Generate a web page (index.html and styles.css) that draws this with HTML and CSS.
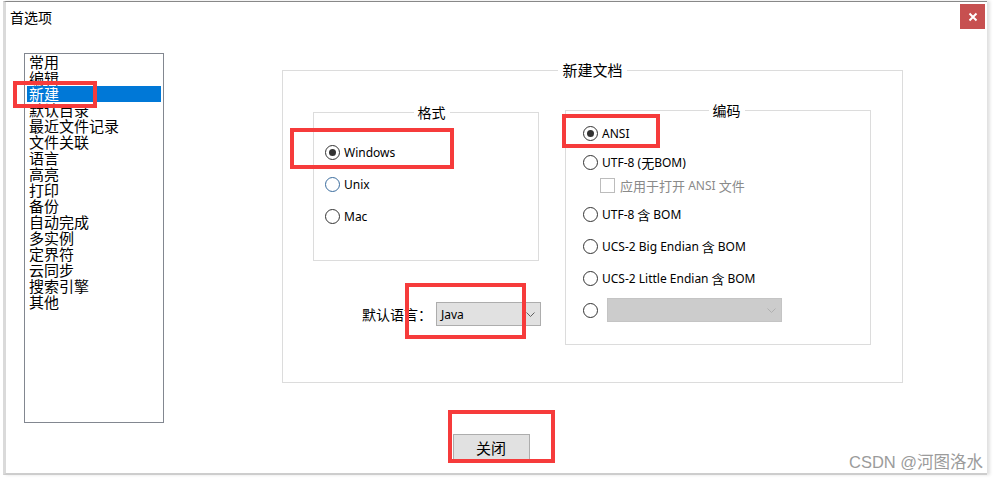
FILE: index.html
```html
<!DOCTYPE html>
<html lang="zh-CN">
<head>
  <meta charset="UTF-8">
  <meta name="viewport" content="width=device-width, initial-scale=1.0">
  <link rel="stylesheet" href="styles.css">
</head>
<body>
  <!-- 对话框窗口 -->
  <div class="window">
    <div class="titlebar">
      <span class="title">首选项</span>
      <button class="close">
        <svg width="10" height="10" viewBox="0 0 10 10"><path d="M1.5 1.5 L8.5 8.5 M8.5 1.5 L1.5 8.5" stroke="#fff" stroke-width="2"/></svg>
      </button>
    </div>

    <div class="content">
      <!-- 左侧分类列表 -->
      <ul class="nav">
        <li>常用</li>
        <li>编辑</li>
        <li class="selected">新建</li>
        <li>默认目录</li>
        <li>最近文件记录</li>
        <li>文件关联</li>
        <li>语言</li>
        <li>高亮</li>
        <li>打印</li>
        <li>备份</li>
        <li>自动完成</li>
        <li>多实例</li>
        <li>定界符</li>
        <li>云同步</li>
        <li>搜索引擎</li>
        <li>其他</li>
      </ul>

      <!-- 新建文档 -->
      <fieldset class="group main">
        <legend>新建文档</legend>
        <div class="main-inner">
          <div class="left-col">
            <fieldset class="group format">
              <legend>格式</legend>
              <div class="opt"><span class="radio on"></span>Windows</div>
              <div class="opt"><span class="radio hover"></span>Unix</div>
              <div class="opt"><span class="radio"></span>Mac</div>
            </fieldset>
            <div class="lang-row">
              <label>默认语言：</label>
              <div class="combo">
                <span>Java</span>
                <svg width="9" height="5" viewBox="0 0 9 5"><polyline points="0.5,0.5 4.5,4.5 8.5,0.5" fill="none" stroke="#606060"/></svg>
              </div>
            </div>
          </div>

          <fieldset class="group enc">
            <legend>编码</legend>
            <div class="opt gap7"><span class="radio on"></span>ANSI</div>
            <div class="opt gap13"><span class="radio"></span>UTF-8 (<span class="zh">无</span>BOM)</div>
            <div class="opt sub gap7"><span class="checkbox"></span><span class="zh">应用于打开</span>&nbsp;ANSI&nbsp;<span class="zh">文件</span></div>
            <div class="opt gap13"><span class="radio"></span>UTF-8 <span class="zh">&nbsp;含&nbsp;</span>BOM</div>
            <div class="opt"><span class="radio"></span>UCS-2 Big Endian <span class="zh">&nbsp;含&nbsp;</span>BOM</div>
            <div class="opt"><span class="radio"></span>UCS-2 Little Endian <span class="zh">&nbsp;含&nbsp;</span>BOM</div>
            <div class="opt combo-row"><span class="radio"></span>
              <div class="combo disabled">
                <svg width="9" height="5" viewBox="0 0 9 5"><polyline points="0.5,0.5 4.5,4.5 8.5,0.5" fill="none" stroke="#b0b0b0"/></svg>
              </div>
            </div>
          </fieldset>
        </div>
      </fieldset>
    </div>

    <div class="footer">
      <button class="btn">关闭</button>
    </div>
  </div>

  <!-- 截图上的红色标注框 -->
  <div class="mark" style="left:13px; top:81px; width:84px; height:27px;"></div>
  <div class="mark" style="left:290px; top:128px; width:164px; height:41px;"></div>
  <div class="mark" style="left:562px; top:114px; width:98px; height:34px;"></div>
  <div class="mark" style="left:405px; top:283px; width:121px; height:56px;"></div>
  <div class="mark" style="left:448px; top:410px; width:107px; height:53px;"></div>

  <div class="watermark">CSDN @河图洛水</div>
</body>
</html>
```

FILE: styles.css
```css
body {
  margin: 0;
  padding: 1px 0 0 3px;
  position: relative;
  width: 1001px;
  height: 480px;
  box-sizing: border-box;
  overflow: hidden;
  background: #fff;
  font-family: "Noto Sans", "Noto Sans CJK SC", sans-serif;
  color: #000;
}

/* 窗口外框 */
.window {
  box-sizing: border-box;
  width: 984px;
  height: 474px;
  border-top: 1px solid #888;
  border-left: 3px solid #dadada;
  border-bottom: 2px solid #cdcdcd;
  box-shadow: 3px 0 3px rgba(0, 0, 0, 0.12);
  background: #fff;
}

.titlebar {
  display: flex;
  align-items: center;
  height: 30px;
}
.title {
  padding-left: 4px;
  font-family: "Noto Sans CJK SC", sans-serif;
  font-size: 14px;
}
.close {
  margin: 2px 2px 0 auto;
  align-self: flex-start;
  width: 25px;
  height: 25px;
  padding: 0;
  border: 0;
  background: #c75050;
  display: flex;
  align-items: center;
  justify-content: center;
}

.content {
  display: flex;
  align-items: flex-start;
  margin-top: 21px;
  padding-left: 18px;
}

/* 左侧列表 */
.nav {
  list-style: none;
  margin: 0;
  padding: 0;
  box-sizing: border-box;
  width: 140px;
  height: 370px;
  border: 1px solid #828790;
  font-family: "Noto Sans CJK SC", sans-serif;
  font-size: 15px;
  line-height: 16px;
}
.nav li {
  margin: 0 2px;
  padding-left: 2px;
}
.nav li.selected {
  background: #0078d7;
  color: #fff;
}

/* 分组框 */
.group {
  box-sizing: border-box;
  margin: 0;
  padding: 0;
  min-width: 0;
  border: 1px solid #dcdcdc;
}
.group legend {
  margin: 0 auto;
  padding: 0 4px;
  font-family: "Noto Sans CJK SC", sans-serif;
  font-size: 15px;
  line-height: 16px;
}
.format legend,
.enc legend {
  font-size: 14px;
}

.main {
  margin: 9px 0 0 118px;
  width: 621px;
  height: 321px;
}
.main-inner {
  display: flex;
  align-items: flex-start;
  padding: 24px 0 0 30px;
}

.left-col {
  width: 226px;
  margin-top: 2px;
}
.format {
  width: 226px;
  height: 157px;
  padding: 16px 0 0 11px;
}

.opt {
  display: flex;
  align-items: center;
  height: 32px;
  font-size: 12px;
  white-space: nowrap;
}
.zh {
  font-family: "Noto Sans CJK SC", sans-serif;
  font-size: 13px;
}

.radio {
  box-sizing: border-box;
  flex: none;
  width: 15px;
  height: 15px;
  margin-right: 4px;
  border: 1px solid #333;
  border-radius: 50%;
  background: #fff;
  display: flex;
  align-items: center;
  justify-content: center;
}
.radio.hover {
  border-color: #3a6c9e;
}
.radio.on::after {
  content: "";
  width: 7px;
  height: 7px;
  border-radius: 50%;
  background: #333;
}

.checkbox {
  box-sizing: border-box;
  flex: none;
  width: 15px;
  height: 15px;
  margin-right: 5px;
  border: 1px solid #bcbcbc;
  background: #fff;
}

.lang-row {
  display: flex;
  justify-content: flex-end;
  align-items: center;
  gap: 4px;
  margin: 41px -2px 0 0;
  font-family: "Noto Sans CJK SC", sans-serif;
  font-size: 14px;
}

.combo {
  box-sizing: border-box;
  width: 105px;
  height: 24px;
  padding: 0 5px 0 4px;
  border: 1px solid #adadad;
  background: #e1e1e1;
  display: flex;
  align-items: center;
  font-family: "Noto Sans", sans-serif;
  font-size: 12px;
}
.combo svg {
  margin-left: auto;
}
.combo.disabled {
  width: 175px;
  margin-left: 5px;
  border-color: #c4c4c4;
  background: #cccccc;
}

/* 编码 */
.enc {
  margin-left: 26px;
  width: 306px;
  height: 243px;
  padding: 0 0 0 17px;
}
.enc .opt {
  height: 16px;
  margin-top: 16px;
}
.enc .opt.gap7 {
  margin-top: 7px;
}
.enc .opt.gap13 {
  margin-top: 13px;
}
.enc .opt.sub {
  padding-left: 17px;
  color: #8a8a8a;
}
.enc .opt.combo-row {
  height: 24px;
  margin-top: 12px;
}

.footer {
  display: flex;
  justify-content: center;
  margin-top: 11px;
  padding-right: 11px;
}
.btn {
  width: 77px;
  height: 26px;
  padding: 0;
  border: 1px solid #adadad;
  background: #e1e1e1;
  font-family: "Noto Sans CJK SC", sans-serif;
  font-size: 15px;
  color: #000;
}

/* 标注 */
.mark {
  position: absolute;
  box-sizing: border-box;
  border: 4px solid #f63b3b;
}

.watermark {
  position: absolute;
  left: 849px;
  top: 452px;
  font-family: "Liberation Sans", "Noto Sans CJK SC", sans-serif;
  font-size: 16.5px;
  line-height: 20px;
  color: #9b9b9b;
}
```
